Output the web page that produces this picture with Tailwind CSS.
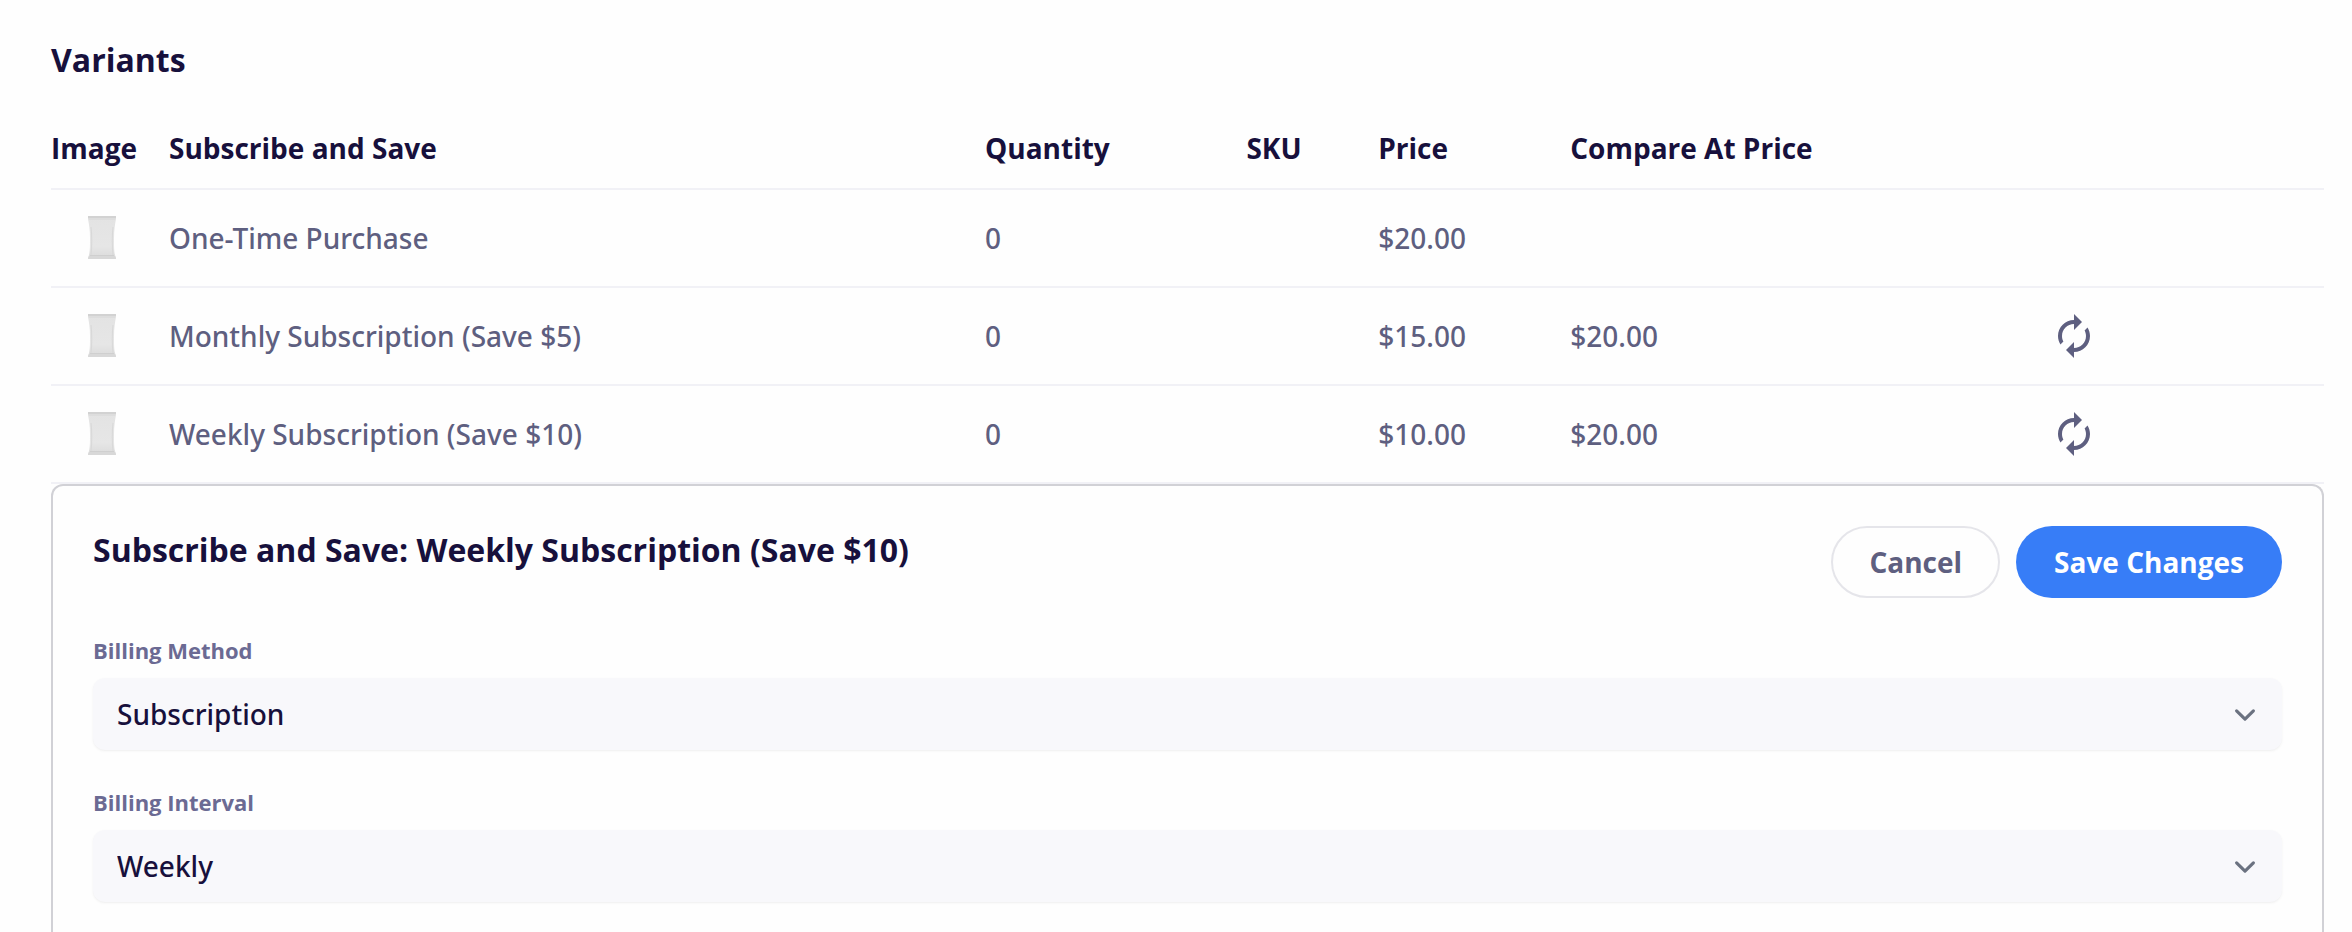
<!DOCTYPE html>
<html lang="en">
<head>
    <meta charset="UTF-8">
    <meta name="viewport" content="width=device-width, initial-scale=1.0">
    <title>Variants</title>
    <script src="https://cdn.jsdelivr.net/npm/@tailwindcss/browser@4"></script>
</head>
<body class="bg-[#fefefe] font-['Open_Sans','Noto_Sans',sans-serif] text-[28px] leading-10 text-[#5e5f80]">
    <!-- Shared graphics -->
    <svg class="absolute size-0" aria-hidden="true">
        <defs>
            <linearGradient id="bagFill" x1="0" y1="0" x2="0" y2="1">
                <stop offset="0" stop-color="#e3e3e3" />
                <stop offset="0.7" stop-color="#e6e6e6" />
                <stop offset="1" stop-color="#dadada" />
            </linearGradient>
        </defs>
        <symbol id="bag" viewBox="0 0 28 44">
            <path fill="url(#bagFill)" d="M0 1h28v2c-1 5-2 11-2 19s0 13 1 17l1 3v1H0v-1l1-3c1-4 1-9 1-17S1 8 0 3z" />
            <path fill="#d2d2d2" d="M0 0h28v2H0z" />
            <path fill="#dddddd" d="M0 2h28l-1 2H1z" />
            <path fill="none" stroke="#d8d8d8" d="M3 11c1 9 1 19 0 28M25 11c-1 9-1 19 0 28" />
            <path fill="#cfcfcf" d="M2 39h24v1H2z" />
            <path fill="#d8d8d8" d="M1 40h26l1 3H0z" />
        </symbol>
        <symbol id="autorenew" viewBox="0 0 24 24">
            <path fill="currentColor" d="M12 6v3l4-4-4-4v3c-4.42 0-8 3.58-8 8 0 1.57.46 3.03 1.24 4.26L6.7 14.8c-.45-.83-.7-1.79-.7-2.8 0-3.31 2.69-6 6-6zm6.76 1.74L17.3 9.2c.44.84.7 1.79.7 2.8 0 3.31-2.69 6-6 6v-3l-4 4 4 4v-3c4.42 0 8-3.58 8-8 0-1.57-.46-3.03-1.24-4.26z" />
        </symbol>
        <symbol id="chevron" viewBox="0 0 20 20">
            <path fill="none" stroke="#6b7280" stroke-linecap="round" stroke-linejoin="round" stroke-width="1.5" d="M6 8l4 4 4-4" />
        </symbol>
    </svg>

    <main class="flex min-h-screen flex-col pt-9 pr-7 pl-[51px]">
        <h2 class="mb-6 text-[32px] leading-12 font-bold text-[#17103c]">Variants</h2>

        <table class="w-full table-fixed border-separate border-spacing-0 text-left">
            <colgroup>
                <col class="w-[118px]">
                <col class="w-[35.9%]">
                <col class="w-[11.5%]">
                <col class="w-[5.8%]">
                <col class="w-[8.45%]">
                <col class="w-[21.1%]">
                <col>
            </colgroup>
            <thead class="text-[#17103c]">
                <tr class="*:border-b-2 *:border-[#f1f1f6] *:py-5 *:font-bold">
                    <th scope="col">Image</th>
                    <th scope="col">Subscribe and Save</th>
                    <th scope="col">Quantity</th>
                    <th scope="col">SKU</th>
                    <th scope="col">Price</th>
                    <th scope="col">Compare At Price</th>
                    <td></td>
                </tr>
            </thead>
            <tbody class="font-['Noto_Sans','Open_Sans',sans-serif] font-medium">
                <tr class="*:h-[98px] *:border-b-2 *:border-[#f1f1f6]">
                    <td><svg class="ml-[37px] h-11 w-7" role="img" aria-label="Product image"><use href="#bag" /></svg></td>
                    <td>One-Time Purchase</td>
                    <td>0</td>
                    <td></td>
                    <td>$20.00</td>
                    <td></td>
                    <td></td>
                </tr>
                <tr class="*:h-[98px] *:border-b-2 *:border-[#f1f1f6]">
                    <td><svg class="ml-[37px] h-11 w-7" role="img" aria-label="Product image"><use href="#bag" /></svg></td>
                    <td>Monthly Subscription (Save $5)</td>
                    <td>0</td>
                    <td></td>
                    <td>$15.00</td>
                    <td>$20.00</td>
                    <td><button type="button" class="block" aria-label="Edit subscription"><svg class="size-12"><use href="#autorenew" /></svg></button></td>
                </tr>
                <tr class="*:h-[98px] *:border-b-2 *:border-[#f1f1f6]">
                    <td><svg class="ml-[37px] h-11 w-7" role="img" aria-label="Product image"><use href="#bag" /></svg></td>
                    <td>Weekly Subscription (Save $10)</td>
                    <td>0</td>
                    <td></td>
                    <td>$10.00</td>
                    <td>$20.00</td>
                    <td><button type="button" class="block" aria-label="Edit subscription"><svg class="size-12"><use href="#autorenew" /></svg></button></td>
                </tr>
            </tbody>
        </table>

        <!-- Subscription editor -->
        <form class="flex-1 rounded-t-xl border-2 border-b-0 border-[#d1d1d6] px-10 pt-10">
            <div class="flex items-start justify-between">
                <h3 class="text-[32px] leading-12 font-bold text-[#17103c]">Subscribe and Save: Weekly Subscription (Save $10)</h3>
                <div class="flex gap-4">
                    <button type="button" class="h-18 rounded-full border-2 border-[#e5e5ea] px-9 font-bold">Cancel</button>
                    <button type="submit" class="h-18 rounded-full bg-[#377df7] px-[38px] font-bold text-white">Save Changes</button>
                </div>
            </div>

            <div class="mt-9">
                <label for="billing-method" class="mb-3 block text-[22px] leading-8 font-bold text-[#6b6a93]">Billing Method</label>
                <div class="relative">
                    <select id="billing-method" class="block h-18 w-full appearance-none rounded-xl bg-[#f8f8fb] px-6 font-['Noto_Sans','Open_Sans',sans-serif] font-medium text-[#17103c] shadow-sm shadow-black/5">
                        <option>Subscription</option>
                        <option>One-Time</option>
                    </select>
                    <svg class="pointer-events-none absolute inset-y-4 right-4 size-[42px]"><use href="#chevron" /></svg>
                </div>
            </div>

            <div class="mt-9">
                <label for="billing-interval" class="mb-3 block text-[22px] leading-8 font-bold text-[#6b6a93]">Billing Interval</label>
                <div class="relative">
                    <select id="billing-interval" class="block h-18 w-full appearance-none rounded-xl bg-[#f8f8fb] px-6 font-['Noto_Sans','Open_Sans',sans-serif] font-medium text-[#17103c] shadow-sm shadow-black/5">
                        <option>Weekly</option>
                        <option>Monthly</option>
                    </select>
                    <svg class="pointer-events-none absolute inset-y-4 right-4 size-[42px]"><use href="#chevron" /></svg>
                </div>
            </div>
        </form>
    </main>
</body>
</html>
